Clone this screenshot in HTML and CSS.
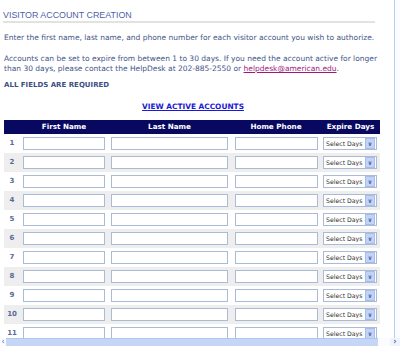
FILE: index.html
```html
<!DOCTYPE html>
<html lang="en">
<head>
  <meta charset="UTF-8">
  <title>Visitor Account Creation</title>
  <link rel="stylesheet" href="styles.css">
</head>
<body>
  <div class="window">
    <div class="viewport">
      <div class="page">
        <h1>VISITOR ACCOUNT CREATION</h1>
        <p class="intro">Enter the first name, last name, and phone number for each visitor account you wish to authorize.</p>
        <p class="intro">Accounts can be set to expire from between 1 to 30 days. If you need the account active for longer than 30 days, please contact the HelpDesk at 202-885-2550 or <a class="mail" href="#">helpdesk@american.edu</a>.</p>
        <p class="required">ALL FIELDS ARE REQUIRED</p>
        <div class="view-row"><a class="view-link" href="#">VIEW ACTIVE ACCOUNTS</a></div>
        <table class="accounts">
          <thead>
            <tr>
              <th class="num"></th>
              <th>First Name</th>
              <th>Last Name</th>
              <th>Home Phone</th>
              <th>Expire Days</th>
            </tr>
          </thead>
          <tbody id="rows"></tbody>
        </table>
      </div>
      <div class="vscroll"></div>
    </div>
    <div class="hscroll">
      <span class="hbtn left">&#8249;</span>
      <span class="thumb"></span>
      <span class="track"></span>
      <span class="hbtn right">&#8250;</span>
    </div>
  </div>
  <script>
    var body = document.getElementById('rows');
    var html = '';
    for (var i = 1; i <= 11; i++) {
      html += '<tr>' +
        '<td class="num">' + i + '</td>' +
        '<td class="c-first"><input type="text"></td>' +
        '<td class="c-last"><input type="text"></td>' +
        '<td class="c-phone"><input type="text"></td>' +
        '<td class="c-days"><div class="select"><span class="sel-text">Select Days</span><span class="sel-btn">&#8744;</span></div></td>' +
        '</tr>';
    }
    body.innerHTML = html;
  </script>
</body>
</html>
```

FILE: styles.css
```css
html, body {
  margin: 0;
  padding: 0;
  background: #fff;
}
body {
  font-family: "DejaVu Sans", Verdana, sans-serif;
  width: 400px;
  height: 346px;
  overflow: hidden;
}
.window {
  display: flex;
  flex-direction: column;
  height: 346px;
}
.viewport {
  flex: 1;
  display: flex;
  overflow: hidden;
}
.page {
  width: 395px;
  padding-left: 4px;
  box-sizing: border-box;
}
.vscroll {
  width: 5px;
  border-left: 1px solid #b9cdf0;
  background: #fbfcff;
}
h1 {
  font-family: "Liberation Sans", Arial, sans-serif;
  font-weight: normal;
  font-size: 8.9px;
  color: #4f5fa6;
  margin: 10px 0 0 -1px;
  padding-bottom: 1px;
  border-bottom: 2px solid #e2e2e2;
  width: 372px;
  line-height: 10px;
}
.intro {
  font-size: 7.5px;
  line-height: 10.5px;
  color: #44558a;
  margin: 10px 0 0;
  white-space: nowrap;
}
.intro + .intro {
  white-space: normal;
  width: 380px;
}
.mail {
  color: #a0187e;
}
.required {
  font-size: 7px;
  line-height: 8px;
  font-weight: bold;
  color: #3e5082;
  margin: 6px 0 0;
}
.view-row {
  width: 376px;
  text-align: center;
  line-height: 9px;
  margin-top: 10px;
  padding-left: 2px;
  box-sizing: border-box;
}
.view-link {
  font-size: 7.4px;
  font-weight: bold;
  color: #1a1ad6;
}
.accounts {
  border-collapse: collapse;
  margin-top: 9px;
  width: 376px;
  table-layout: fixed;
}
.accounts th {
  background: #080860;
  color: #fff;
  font-size: 7.2px;
  font-weight: bold;
  height: 14px;
  padding: 0;
  text-align: center;
}
.accounts th.num { width: 16px; }
.accounts th:nth-child(2) { width: 88px; }
.accounts th:nth-child(3) { width: 123px; }
.accounts th:nth-child(4) { width: 90px; }
.accounts td {
  height: 19px;
  padding: 0;
  vertical-align: middle;
}
.accounts tbody tr:nth-child(even) td {
  background: #eeeeee;
}
.accounts td.num {
  font-size: 7px;
  font-weight: bold;
  color: #5a6a95;
  text-align: center;
}
.accounts input {
  display: block;
  box-sizing: border-box;
  height: 13px;
  margin: 0 0 0 3px;
  border: 1px solid #a9bbd6;
  background: #fff;
  padding: 0;
}
.c-first input { width: 82px; }
.c-last input { width: 117px; }
.c-phone input { width: 83px; margin-left: 4px; }
.select {
  display: flex;
  align-items: center;
  box-sizing: border-box;
  width: 54px;
  height: 13px;
  margin-left: 2px;
  border: 1px solid #a9bbd6;
  background: #fff;
}
.sel-text {
  flex: 1;
  font-size: 6.2px;
  color: #333;
  padding-left: 2px;
  white-space: nowrap;
  overflow: hidden;
}
.sel-btn {
  width: 8px;
  height: 9px;
  margin-right: 1px;
  background: #c3d3f5;
  border: 1px solid #a6bde8;
  color: #4d6bb0;
  font-size: 6px;
  font-weight: bold;
  line-height: 9px;
  text-align: center;
}
.hscroll {
  height: 8px;
  display: flex;
  background: #fbfcff;
}
.hbtn {
  width: 6px;
  font-size: 8px;
  line-height: 7px;
  color: #4d6bb0;
  text-align: center;
}
.hbtn.right {
  width: 10px;
  background: #eef3fd;
  font-weight: bold;
}
.thumb {
  width: 372px;
  background: #c6d6f6;
  border-top: 1px solid #b1c6ee;
}
.track {
  flex: 1;
}
```
